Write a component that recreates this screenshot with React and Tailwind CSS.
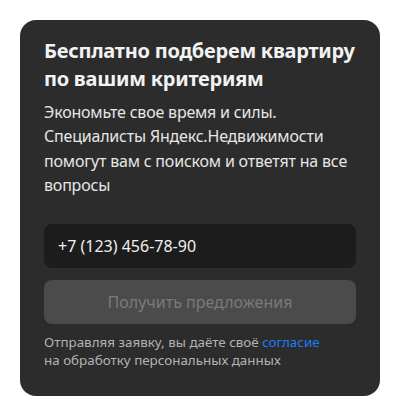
import React from 'react';

function App() {
  return (
    <div className="w-[400px] h-[400px] bg-white p-5" style={{ fontFamily: '"Noto Sans", "Open Sans", sans-serif' }}>
      <div className="w-[360px] h-[376px] bg-[#2c2c2c] rounded-2xl px-6 pt-[17px]">
        <h2 className="text-[20px] leading-[28px] font-bold text-[#f2f2f2] tracking-[-0.25px]">
          Бесплатно подберем квартиру по вашим критериям
        </h2>
        <p className="mt-[7px] text-[16px] leading-[24.3px] text-[#e6e6e6] tracking-[-0.2px]">
          Экономьте свое время и силы. Специалисты Яндекс.Недвижимости помогут вам с поиском и ответят на все вопросы
        </p>
        <div className="mt-[27px] h-[44px] rounded-lg bg-[#1c1c1c] flex items-center px-[14px] text-[16px] text-[#f0f0f0]">
          +7 (123) 456-78-90
        </div>
        <button
          disabled
          className="mt-3 w-full h-[44px] rounded-lg bg-[#4b4b4b] text-[16px] text-[#7a7a7a]"
        >
          Получить предложения
        </button>
        <p className="mt-[9px] text-[13.4px] leading-[18px] text-[#b3b3b3]">
          Отправляя заявку, вы даёте своё <a className="text-[#1a7cf5]">согласие</a>
          <br />
          на обработку персональных данных
        </p>
      </div>
    </div>
  );
}

export default App;
